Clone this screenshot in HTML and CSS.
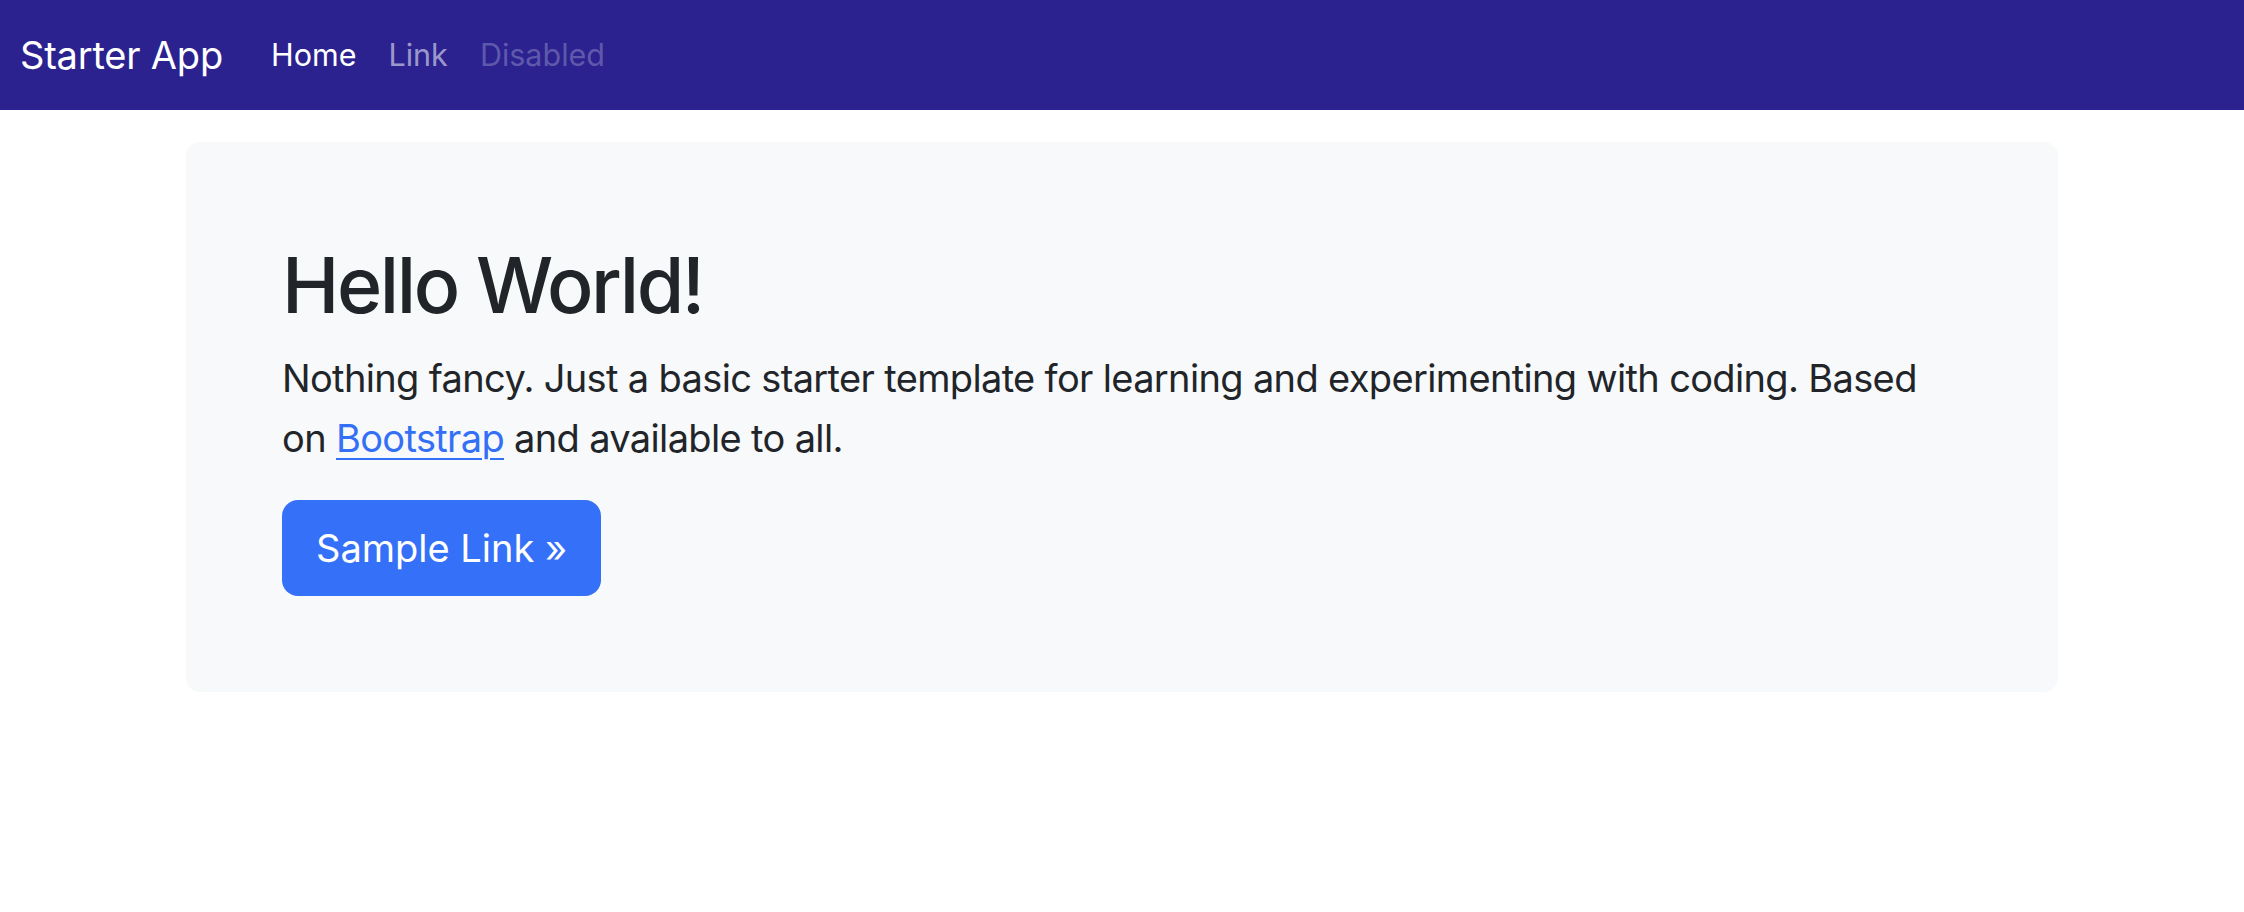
FILE: index.html
```html
<!DOCTYPE html>
<html lang="en">
<head>
<meta charset="utf-8">
<title>Starter App</title>
<link rel="stylesheet" href="styles.css">
</head>
<body>
<nav class="navbar">
  <a class="brand" href="#">Starter App</a>
  <ul class="nav">
    <li><a class="nav-link active" href="#">Home</a></li>
    <li><a class="nav-link" href="#">Link</a></li>
    <li><span class="nav-link disabled">Disabled</span></li>
  </ul>
</nav>
<main class="container">
  <section class="jumbotron">
    <h1 class="title">Hello World!</h1>
    <p class="lead">Nothing fancy. Just a basic starter template for learning and experimenting with coding. Based on <a href="#" class="text-link">Bootstrap</a> and available to all.</p>
    <a class="btn" href="#">Sample Link »</a>
  </section>
</main>
</body>
</html>
```
FILE: styles.css
```css
* { box-sizing: border-box; }
html, body { margin: 0; padding: 0; }
body {
  font-family: Inter, "Noto Sans", "Liberation Sans", sans-serif;
  color: #212529;
  background: #ffffff;
  font-size: 32px;
  line-height: 1.5;
}
a { text-decoration: none; }

.navbar {
  display: flex;
  align-items: center;
  height: 110px;
  padding: 0 24px 0 20px;
  background: #2b228f;
}
.brand {
  color: #ffffff;
  font-size: 38px;
  margin-right: 32px;
  letter-spacing: -0.2px;
}
.nav {
  display: flex;
  list-style: none;
  margin: 0;
  padding: 0;
}
.nav-link {
  display: block;
  padding: 0 16px;
  font-size: 30.5px;
  color: rgba(255, 255, 255, 0.55);
}
.nav-link.active { color: #ffffff; }
.nav-link.disabled { color: rgba(255, 255, 255, 0.25); }

.container {
  width: 1872px;
  margin: 32px auto 0;
}
.jumbotron {
  background: #f8f9fa;
  border-radius: 14px;
  padding: 96px;
}
.title {
  margin: 0 0 16px;
  font-size: 77px;
  font-weight: 500;
  line-height: 94px;
  letter-spacing: -2.4px;
}
.lead {
  margin: 0 0 32px;
  font-size: 38px;
  font-weight: 400;
  line-height: 60px;
  letter-spacing: -0.65px;
}
.text-link {
  color: #3470f6;
  text-decoration: underline;
  text-underline-offset: 6px;
  text-decoration-thickness: 2px;
}
.btn {
  display: inline-block;
  background: #3570f8;
  color: #ffffff;
  font-size: 38px;
  line-height: 60px;
  padding: 18px 34px;
  border-radius: 16px;
}
```
